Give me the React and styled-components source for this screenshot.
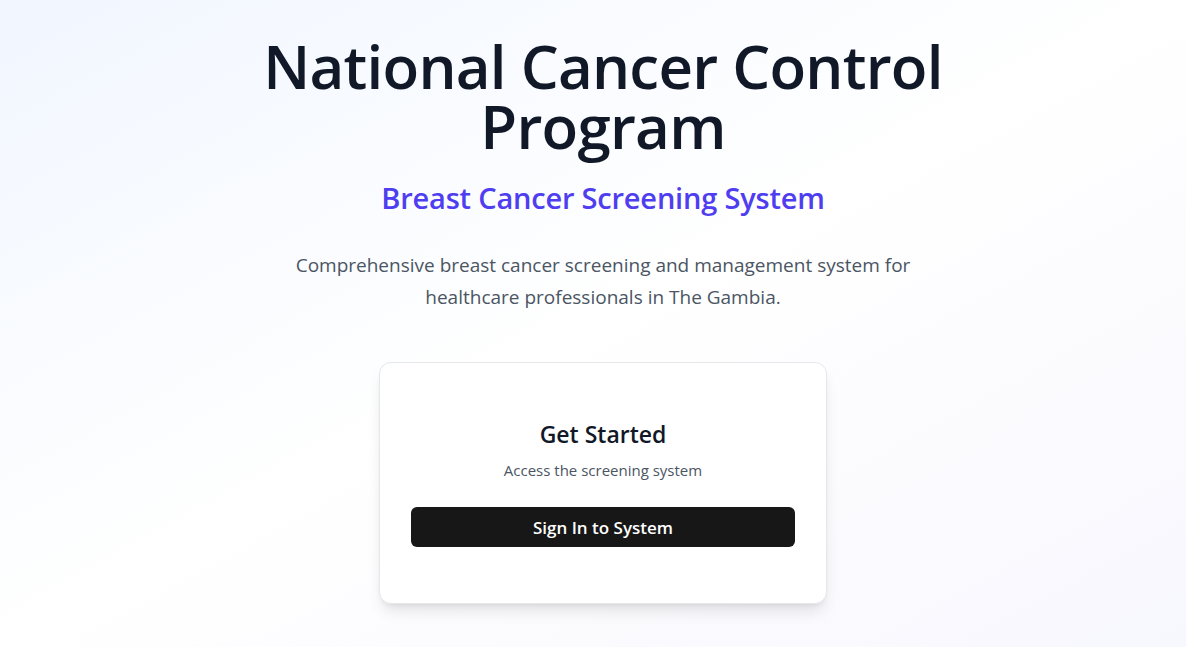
import React from "react";
import styled, { createGlobalStyle } from "styled-components";

const GlobalStyle = createGlobalStyle`
  * { box-sizing: border-box; }
  html, body { margin: 0; padding: 0; }
  body {
    font-family: "Open Sans", "Noto Sans", sans-serif;
    -webkit-font-smoothing: antialiased;
  }
`;

const Page = styled.main`
  min-height: 100vh;
  background: linear-gradient(to bottom right, #f1f6ff 0%, #ffffff 50%, #f7f7fe 100%);
  display: flex;
  flex-direction: column;
  align-items: center;
  padding: 36px 0 40px 20px;
`;

const Title = styled.h1`
  margin: 0 0 24px;
  max-width: 720px;
  text-align: center;
  font-size: 60px;
  line-height: 60px;
  font-weight: 600;
  color: #111827;
  letter-spacing: -0.75px;
`;

const Subtitle = styled.h2`
  margin: 0 0 33px;
  font-size: 29px;
  line-height: 36px;
  font-weight: 600;
  color: #4f3ef0;
  letter-spacing: -0.2px;
`;

const Lead = styled.p`
  margin: 0 0 49px;
  max-width: 640px;
  text-align: center;
  font-size: 19px;
  line-height: 32px;
  color: #4b5563;
`;

const Card = styled.section`
  width: 448px;
  background: #fff;
  border: 1px solid #e5e7eb;
  border-radius: 12px;
  box-shadow: 0 10px 15px -3px rgba(0, 0, 0, 0.1), 0 4px 6px -4px rgba(0, 0, 0, 0.1);
  padding: 55px 31px 56px;
  display: flex;
  flex-direction: column;
  align-items: center;
`;

const CardTitle = styled.h3`
  margin: 0;
  font-size: 23px;
  line-height: 32px;
  font-weight: 600;
  color: #111827;
`;

const CardText = styled.p`
  margin: 10px 0 27px;
  font-size: 15px;
  line-height: 20px;
  color: #4b5563;
`;

const Button = styled.button`
  width: 100%;
  height: 40px;
  border: none;
  border-radius: 6px;
  background: #171717;
  color: #fff;
  font-family: inherit;
  font-size: 17px;
  font-weight: 600;
  cursor: pointer;
`;

export default function App() {
  return (
    <>
      <GlobalStyle />
      <Page>
        <Title>National Cancer Control Program</Title>
        <Subtitle>Breast Cancer Screening System</Subtitle>
        <Lead>
          Comprehensive breast cancer screening and management system for
          healthcare professionals in The Gambia.
        </Lead>
        <Card>
          <CardTitle>Get Started</CardTitle>
          <CardText>Access the screening system</CardText>
          <Button type="button">Sign In to System</Button>
        </Card>
      </Page>
    </>
  );
}
